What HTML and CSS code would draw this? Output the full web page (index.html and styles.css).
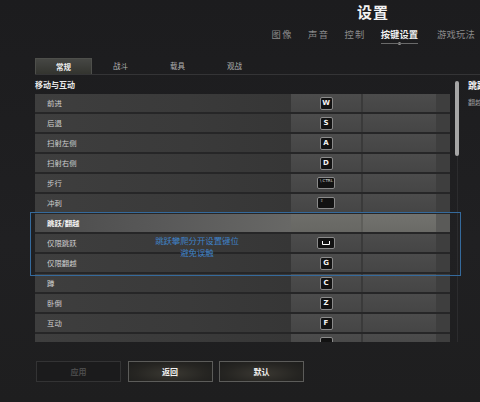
FILE: index.html
```html
<!DOCTYPE html>
<html lang="zh-CN">
<head>
<meta charset="utf-8">
<link rel="stylesheet" href="styles.css">
</head>
<body>
<div class="page">
  <header class="header">
    <div class="title">设置</div>
    <nav class="nav">
      <span class="nav-item">图像</span>
      <span class="nav-item">声音</span>
      <span class="nav-item">控制</span>
      <span class="nav-item active">按键设置</span>
      <span class="nav-item last">游戏玩法</span>
    </nav>
  </header>

  <div class="subtabs">
    <div class="subtab active">常规</div>
    <div class="subtab">战斗</div>
    <div class="subtab">载具</div>
    <div class="subtab">观战</div>
  </div>

  <div class="main">
    <div class="list-col">
      <div class="section">移动与互动</div>
      <div class="list">
        <div class="row"><span class="label">前进</span><span class="k1"><span class="key">W</span></span><span class="k2"></span><span class="rest"></span></div>
        <div class="row"><span class="label">后退</span><span class="k1"><span class="key">S</span></span><span class="k2"></span><span class="rest"></span></div>
        <div class="row"><span class="label">扫射左侧</span><span class="k1"><span class="key">A</span></span><span class="k2"></span><span class="rest"></span></div>
        <div class="row"><span class="label">扫射右侧</span><span class="k1"><span class="key">D</span></span><span class="k2"></span><span class="rest"></span></div>
        <div class="row"><span class="label">步行</span><span class="k1"><span class="key wide"><span class="tiny">\ CTRL</span></span></span><span class="k2"></span><span class="rest"></span></div>
        <div class="row"><span class="label">冲刺</span><span class="k1"><span class="key wide"><span class="tiny">⇧</span></span></span><span class="k2"></span><span class="rest"></span></div>
        <div class="row head"><span class="label">跳跃/翻越</span><span class="k1"></span><span class="k2"></span><span class="rest"></span></div>
        <div class="row"><span class="label">仅限跳跃</span><span class="k1"><span class="key wide space"><svg width="8" height="4" viewBox="0 0 8 4"><path d="M0.5 0 V3.5 H7.5 V0" fill="none" stroke="#fff" stroke-width="1"/></svg></span></span><span class="k2"></span><span class="rest"></span></div>
        <div class="row"><span class="label">仅限翻越</span><span class="k1"><span class="key">G</span></span><span class="k2"></span><span class="rest"></span></div>
        <div class="row"><span class="label">蹲</span><span class="k1"><span class="key">C</span></span><span class="k2"></span><span class="rest"></span></div>
        <div class="row"><span class="label">卧倒</span><span class="k1"><span class="key">Z</span></span><span class="k2"></span><span class="rest"></span></div>
        <div class="row"><span class="label">互动</span><span class="k1"><span class="key">F</span></span><span class="k2"></span><span class="rest"></span></div>
        <div class="row"><span class="label"></span><span class="k1"><span class="key"></span></span><span class="k2"></span><span class="rest"></span></div>
      </div>
    </div>
    <div class="scroll">
      <div class="thumb"></div>
      <div class="track"></div>
    </div>
    <aside class="side">
      <div class="side-title">跳跃</div>
      <div class="side-text">翻越</div>
    </aside>
  </div>

  <div class="buttons">
    <div class="btn disabled">应用</div>
    <div class="btn">返回</div>
    <div class="btn">默认</div>
  </div>

  <div class="note">
    <div class="note-text">跳跃攀爬分开设置键位<br>避免误触</div>
  </div>
</div>
</body>
</html>
```

FILE: styles.css
```css
* { box-sizing: border-box; }
html, body {
  margin: 0;
  padding: 0;
  background: #1e1e20;
}
.page {
  position: relative;
  width: 480px;
  height: 402px;
  overflow: hidden;
  padding-left: 35px;
  font-family: "Noto Sans CJK SC", "Noto Sans", sans-serif;
  color: #d8d8d8;
  background: linear-gradient(180deg, #1c1c1e 0%, #202022 60%, #1e1e1f 100%);
}
.header {
  height: 58px;
}
.title {
  padding-top: 2px;
  padding-left: 322px;
  height: 26px;
  font-size: 15px;
  line-height: 20px;
  font-weight: 700;
  color: #f2f2f2;
  letter-spacing: 1px;
}
.nav {
  display: flex;
  justify-content: flex-end;
  gap: 15px;
  padding-right: 5px;
  font-size: 9.3px;
  line-height: 16px;
  color: #8a8a8a;
}
.nav-item {
  letter-spacing: 1.4px;
}
.nav-item.last {
  letter-spacing: 0.2px;
  margin-left: 4px;
}
.nav-item.active {
  position: relative;
  letter-spacing: 0;
  color: #f0f0f0;
  font-weight: 700;
}
.nav-item.active::after {
  content: "";
  position: absolute;
  left: 0;
  right: 0;
  bottom: -2px;
  height: 1px;
  background: #6a6a6a;
}
.nav-item.active::before {
  content: "";
  position: absolute;
  left: 50%;
  bottom: -3px;
  width: 3px;
  height: 3px;
  margin-left: -1.5px;
  border-radius: 50%;
  background: #9a9a9a;
}
.subtabs {
  display: flex;
  height: 17px;
  border-bottom: 1px solid #343436;
  margin-right: -2px;
}
.subtab {
  width: 57px;
  text-align: center;
  font-size: 7.5px;
  line-height: 16px;
  color: #b0b0b0;
}
.subtab.active {
  background: linear-gradient(180deg, #464744 0%, #33342f 100%);
  border: 1px solid #4e4f4b;
  border-bottom: none;
  color: #f0f0f0;
  font-weight: 700;
}
.main {
  display: flex;
}
.list-col {
  width: 415px;
}
.section {
  height: 19px;
  padding-top: 5px;
  font-size: 8px;
  line-height: 10px;
  font-weight: 700;
  color: #e8e8e8;
}
.list {
  height: 248px;
  overflow: hidden;
  display: flex;
  flex-direction: column;
  gap: 2px;
  background: #262627;
}
.row {
  flex: none;
  height: 18px;
  display: grid;
  grid-template-columns: 256px 72px 73px 14px;
}
.label {
  padding-left: 12px;
  font-size: 7.4px;
  line-height: 18px;
  color: #cfcfcf;
  background: linear-gradient(90deg, #3e3e3e 0%, #3a3a3a 60%, #363636 100%);
}
.k1 {
  display: flex;
  align-items: center;
  justify-content: center;
  background: linear-gradient(180deg, #4c4c4c 0%, #454545 100%);
  border-right: 2px solid #3a3a3a;
}
.k2 {
  background: linear-gradient(180deg, #4c4c4c 0%, #454545 100%);
}
.rest {
  background: #3e3e3e;
}
.row.head .label {
  color: #f4f4f4;
  font-weight: 700;
  background: linear-gradient(90deg, #4b4b4b 0%, #595959 50%, #686866 100%);
}
.row.head .k1 {
  background: linear-gradient(180deg, #6e6e6a 0%, #676763 100%);
  border-right-color: #5e5e5a;
}
.row.head .k2 {
  background: linear-gradient(180deg, #72726e 0%, #6a6a66 100%);
}
.row.head .rest {
  background: #5a5a58;
}
.key {
  position: relative;
  width: 13px;
  height: 13px;
  border: 1px solid #8a8a8a;
  border-radius: 2px;
  background: #121212;
  color: #f4f4f4;
  font-family: "DejaVu Sans", sans-serif;
  font-weight: 700;
  font-size: 7px;
  line-height: 11px;
  text-align: center;
}
.key.wide {
  width: 18px;
  height: 12px;
}
.tiny {
  position: absolute;
  left: 2px;
  top: 0;
  font-size: 4px;
  line-height: 6px;
  font-weight: 400;
  color: #ddd;
  white-space: nowrap;
}
.key.space {
  display: flex;
  align-items: center;
  justify-content: center;
}
.scroll {
  width: 4px;
  margin-left: 5px;
  padding-top: 6px;
  display: flex;
  flex-direction: column;
  align-items: center;
}
.thumb {
  width: 4px;
  height: 75px;
  border-radius: 2px;
  background: #a6a6a6;
}
.track {
  width: 1px;
  height: 186px;
  background: #2c2c2e;
}
.side {
  margin-left: 9px;
  padding-top: 5px;
  white-space: nowrap;
}
.side-title {
  font-size: 9px;
  line-height: 11px;
  font-weight: 700;
  color: #f0f0f0;
}
.side-text {
  margin-top: 7px;
  font-size: 7px;
  line-height: 9px;
  color: #9a9a9a;
}
.buttons {
  display: flex;
  gap: 6.5px;
  margin-top: 19px;
  margin-left: 1px;
}
.btn {
  width: 85px;
  height: 21px;
  border: 1px solid #5c5c5a;
  background: radial-gradient(ellipse at 50% 60%, #3a3832 0%, #262522 60%, #1d1d1c 100%);
  color: #f2f2f2;
  font-size: 8px;
  font-weight: 700;
  line-height: 19px;
  text-align: center;
}
.btn.disabled {
  border-color: #333334;
  background: #1b1b1c;
  color: #4a4a4a;
}
.note {
  position: absolute;
  left: 30px;
  top: 212px;
  width: 431px;
  height: 64px;
  border: 1.5px solid #356a9c;
}
.note-text {
  position: absolute;
  left: 120px;
  top: 21px;
  width: 92px;
  text-align: center;
  font-size: 8.4px;
  line-height: 12px;
  color: #3f82c8;
}
```
